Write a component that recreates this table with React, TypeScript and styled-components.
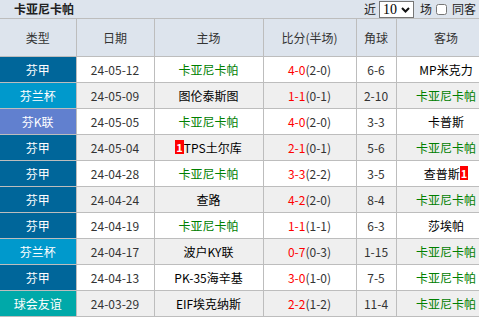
import React from "react";
import styled, { createGlobalStyle } from "styled-components";

const Global = createGlobalStyle`
  html, body { margin: 0; padding: 0; overflow: hidden; background: #fff; }
  body { font-family: "Noto Sans CJK SC", "Noto Sans", sans-serif; font-size: 12px; color: #333; }
`;

const Page = styled.div`
  width: 479px;
  overflow: hidden;
`;

const TitleBar = styled.div`
  display: flex;
  align-items: center;
  justify-content: space-between;
  height: 18px;
  background: #dde4ed;
  border-bottom: 1px solid #bdbdbd;
  padding: 0 3px 0 14px;
`;

const Title = styled.span`
  font-weight: bold;
  font-size: 12px;
  color: #222;
  line-height: 18px;
`;

const Controls = styled.div`
  display: flex;
  align-items: center;
  font-size: 12px;
  color: #222;
  line-height: 18px;
`;

const SelectWrap = styled.span`
  position: relative;
  display: inline-block;
  margin: 0 6px 0 3px;
`;

const Select = styled.select`
  appearance: none;
  width: 35px;
  height: 17px;
  border: 1px solid #767676;
  border-radius: 0;
  background: #fff;
  font-family: "Liberation Serif", serif;
  font-size: 14px;
  padding: 0 0 0 3px;
  color: #000;
  display: block;
`;

const Chevron = styled.svg`
  position: absolute;
  right: 4px;
  top: 6px;
  pointer-events: none;
`;

const Check = styled.input`
  width: 11px;
  height: 11px;
  margin: 0 5px 0 0;
`;

const Table = styled.table`
  border-collapse: collapse;
  table-layout: fixed;
  width: 496px;
`;

const HeadCell = styled.th`
  height: 37px;
  background: #dde4ed;
  border: 1px solid #bdbdbd;
  border-top: none;
  font-weight: normal;
  font-size: 12px;
  color: #333;
  padding: 0;
  text-align: center;
  &:first-child { border-left: none; }
`;

const Row = styled.tr<{ $alt: boolean }>`
  background: ${(p) => (p.$alt ? "#efefef" : "#fff")};
`;

const Cell = styled.td`
  height: 25px;
  border: 1px solid #bdbdbd;
  padding: 0;
  text-align: center;
  white-space: nowrap;
  overflow: hidden;
  font-size: 12px;
  color: #333;
  &:first-child { border-left: none; }
`;

const LeagueCell = styled(Cell)<{ $bg: string }>`
  background: ${(p) => p.$bg};
  color: #fff;
`;

const Team = styled.span<{ $green?: boolean }>`
  color: ${(p) => (p.$green ? "#008000" : "#000")};
`;

const Badge = styled.span`
  display: inline-block;
  background: #f00;
  color: #fff;
  font-weight: bold;
  font-size: 11px;
  line-height: 14px;
  padding: 0 1px;
  vertical-align: 1px;
`;

const Full = styled.span`
  color: #f00;
`;

const Half = styled.span`
  color: #333;
`;

type Side = { name: string; green?: boolean; badgeBefore?: string; badgeAfter?: string };
type Match = {
  league: string;
  color: string;
  date: string;
  home: Side;
  ft: string;
  ht: string;
  corner: string;
  away: Side;
};

const C1 = "#00669a";
const C2 = "#0099cc";
const C3 = "#6180cf";
const C4 = "#00a9a9";
const K = "卡亚尼卡帕";

const matches: Match[] = [
  { league: "芬甲", color: C1, date: "24-05-12", home: { name: K, green: true }, ft: "4-0", ht: "(2-0)", corner: "6-6", away: { name: "MP米克力" } },
  { league: "芬兰杯", color: C2, date: "24-05-09", home: { name: "图伦泰斯图" }, ft: "1-1", ht: "(0-1)", corner: "2-10", away: { name: K, green: true } },
  { league: "芬K联", color: C3, date: "24-05-05", home: { name: K, green: true }, ft: "4-0", ht: "(2-0)", corner: "3-3", away: { name: "卡普斯" } },
  { league: "芬甲", color: C1, date: "24-05-04", home: { name: "TPS土尔库", badgeBefore: "1" }, ft: "2-1", ht: "(0-1)", corner: "5-6", away: { name: K, green: true } },
  { league: "芬甲", color: C1, date: "24-04-28", home: { name: K, green: true }, ft: "3-3", ht: "(2-2)", corner: "3-5", away: { name: "查普斯", badgeAfter: "1" } },
  { league: "芬甲", color: C1, date: "24-04-24", home: { name: "查路" }, ft: "4-2", ht: "(2-0)", corner: "8-4", away: { name: K, green: true } },
  { league: "芬甲", color: C1, date: "24-04-19", home: { name: K, green: true }, ft: "1-1", ht: "(1-1)", corner: "6-3", away: { name: "莎埃帕" } },
  { league: "芬兰杯", color: C2, date: "24-04-17", home: { name: "波户KY联" }, ft: "0-7", ht: "(0-3)", corner: "1-15", away: { name: K, green: true } },
  { league: "芬甲", color: C1, date: "24-04-13", home: { name: "PK-35海辛基" }, ft: "3-0", ht: "(1-0)", corner: "7-5", away: { name: K, green: true } },
  { league: "球会友谊", color: C4, date: "24-03-29", home: { name: "EIF埃克纳斯" }, ft: "2-2", ht: "(1-2)", corner: "11-4", away: { name: K, green: true } },
];

const TeamView = ({ s }: { s: Side }) => (
  <>
    {s.badgeBefore && <Badge>{s.badgeBefore}</Badge>}
    <Team $green={s.green}>{s.name}</Team>
    {s.badgeAfter && <Badge>{s.badgeAfter}</Badge>}
  </>
);

export default function App() {
  return (
    <Page>
      <Global />
      <TitleBar>
        <Title>卡亚尼卡帕</Title>
        <Controls>
          <span>近</span>
          <SelectWrap>
            <Select defaultValue="10">
              <option value="10">10</option>
              <option value="20">20</option>
            </Select>
            <Chevron width="9" height="6" viewBox="0 0 9 6">
              <path d="M1 1 L4.5 4.5 L8 1" fill="none" stroke="#111" strokeWidth="2" />
            </Chevron>
          </SelectWrap>
          <span>场</span>
          <Check type="checkbox" style={{ marginLeft: 4 }} />
          <span>同客</span>
        </Controls>
      </TitleBar>
      <Table>
        <colgroup>
          <col style={{ width: 76 }} />
          <col style={{ width: 78 }} />
          <col style={{ width: 109 }} />
          <col style={{ width: 93 }} />
          <col style={{ width: 40 }} />
          <col style={{ width: 100 }} />
        </colgroup>
        <thead>
          <tr>
            <HeadCell>类型</HeadCell>
            <HeadCell>日期</HeadCell>
            <HeadCell>主场</HeadCell>
            <HeadCell>比分(半场)</HeadCell>
            <HeadCell>角球</HeadCell>
            <HeadCell>客场</HeadCell>
          </tr>
        </thead>
        <tbody>
          {matches.map((m, i) => (
            <Row key={i} $alt={i % 2 === 1}>
              <LeagueCell $bg={m.color}>{m.league}</LeagueCell>
              <Cell>{m.date}</Cell>
              <Cell><TeamView s={m.home} /></Cell>
              <Cell><Full>{m.ft}</Full><Half>{m.ht}</Half></Cell>
              <Cell>{m.corner}</Cell>
              <Cell><TeamView s={m.away} /></Cell>
            </Row>
          ))}
        </tbody>
      </Table>
    </Page>
  );
}
